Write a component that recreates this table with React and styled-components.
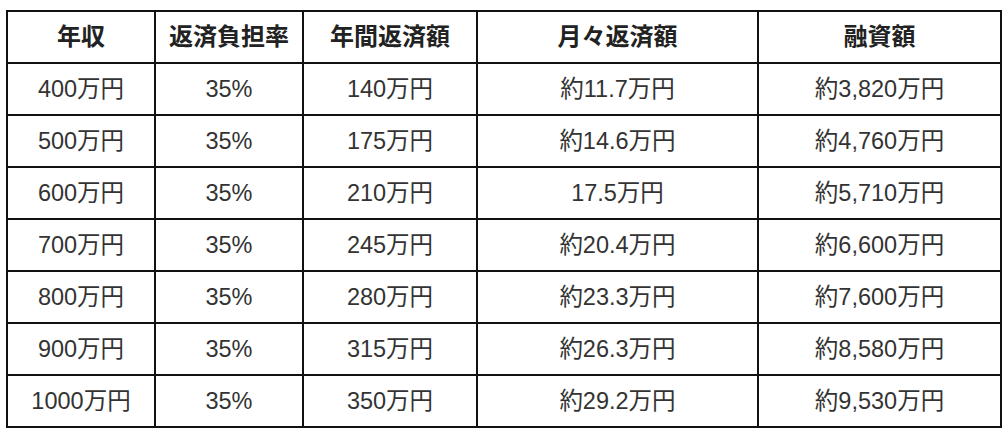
import React from "react";
import styled, { createGlobalStyle } from "styled-components";

const rows = [
	["400万円", "35%", "140万円", "約11.7万円", "約3,820万円"],
	["500万円", "35%", "175万円", "約14.6万円", "約4,760万円"],
	["600万円", "35%", "210万円", "17.5万円", "約5,710万円"],
	["700万円", "35%", "245万円", "約20.4万円", "約6,600万円"],
	["800万円", "35%", "280万円", "約23.3万円", "約7,600万円"],
	["900万円", "35%", "315万円", "約26.3万円", "約8,580万円"],
	["1000万円", "35%", "350万円", "約29.2万円", "約9,530万円"]
];

const headers = ["年収", "返済負担率", "年間返済額", "月々返済額", "融資額"];
const widths = [148, 148, 174, 281, 243];

export default function App() {
	return (
		<>
			<GlobalStyle />
			<Page>
				<Table>
					<colgroup>
						{widths.map((w, i) => (
							<col key={i} style={{ width: w }} />
						))}
					</colgroup>
					<thead>
						<Row>
							{headers.map(h => (
								<HeadCell key={h}>{h}</HeadCell>
							))}
						</Row>
					</thead>
					<tbody>
						{rows.map(r => (
							<Row key={r[0]}>
								{r.map((c, i) => (
									<Cell key={i}>{c}</Cell>
								))}
							</Row>
						))}
					</tbody>
				</Table>
			</Page>
		</>
	);
}

// styled components -------------------------

const GlobalStyle = createGlobalStyle`
	body {
		margin: 0;
		background: #fff;
		font-family: "Liberation Sans", "Noto Sans CJK JP", sans-serif;
	}
`;

const Page = styled.div`
	padding: 10px 0 0 6px;
`;

const Table = styled.table`
	border-collapse: collapse;
	table-layout: fixed;
	width: 994px;
	border: 2px solid #111;
`;

const Row = styled.tr`
	height: 52px;
`;

const HeadCell = styled.th`
	border: 2px solid #111;
	padding: 0;
	text-align: center;
	vertical-align: middle;
	font-size: 24px;
	line-height: 26px;
	font-weight: 700;
	color: #222;
`;

const Cell = styled.td`
	border: 2px solid #111;
	padding: 0;
	text-align: center;
	vertical-align: middle;
	font-size: 23.5px;
	line-height: 26px;
	color: #333;
`;

// -------------------------------------------
